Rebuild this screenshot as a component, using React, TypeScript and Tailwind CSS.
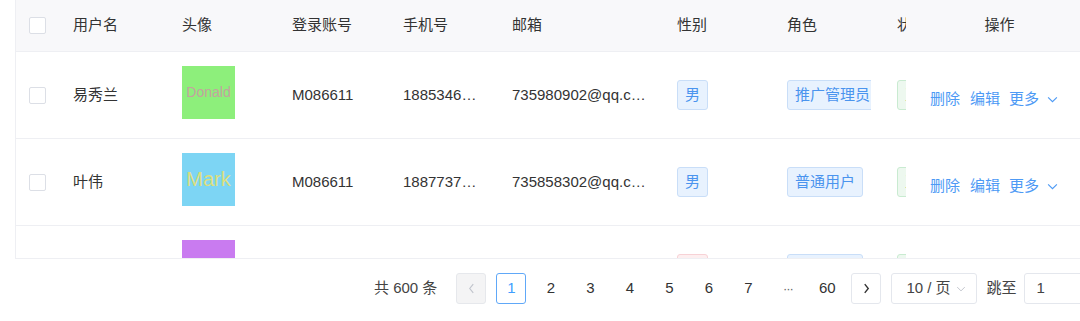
import React from "react";

const FONT = { fontFamily: '"Liberation Sans", "Noto Sans CJK SC", sans-serif' };

type Row = {
  name: string;
  avatarBg: string;
  avatarText: string;
  avatarColor: string;
  avatarSize: string;
  account: string;
  phone: string;
  email: string;
  gender: string;
  role: string;
};

const rows: Row[] = [
  {
    name: "易秀兰",
    avatarBg: "bg-[#8def7b]",
    avatarText: "Donald",
    avatarColor: "text-[#c4a29f]",
    avatarSize: "text-[14px]",
    account: "M086611",
    phone: "1885346…",
    email: "735980902@qq.c…",
    gender: "男",
    role: "推广管理员",
  },
  {
    name: "叶伟",
    avatarBg: "bg-[#7dd5f4]",
    avatarText: "Mark",
    avatarColor: "text-[#dcdf7e]",
    avatarSize: "text-[20px]",
    account: "M086611",
    phone: "1887737…",
    email: "735858302@qq.c…",
    gender: "男",
    role: "普通用户",
  },
  {
    name: "刘娜",
    avatarBg: "bg-[#c97bf0]",
    avatarText: "Lisa",
    avatarColor: "text-[#e0b0f7]",
    avatarSize: "text-[16px]",
    account: "M086611",
    phone: "1883921…",
    email: "735112902@qq.c…",
    gender: "女",
    role: "普通用户",
  },
];

function Checkbox() {
  return <div className="w-[17px] h-[17px] shrink-0 rounded-[2px] border border-[#dcdfe6] bg-white" />;
}

function ChevronDown({ className }: { className?: string }) {
  return (
    <svg className={className} viewBox="0 0 12 8" fill="none" stroke="currentColor" strokeWidth="1.3">
      <path d="M1 1.5 L6 6.5 L11 1.5" />
    </svg>
  );
}

function ChevronLeft({ className }: { className?: string }) {
  return (
    <svg className={className} viewBox="0 0 8 12" fill="none" stroke="currentColor" strokeWidth="1.3">
      <path d="M6 1 L2 6 L6 11" />
    </svg>
  );
}

function ChevronRight({ className }: { className?: string }) {
  return (
    <svg className={className} viewBox="0 0 8 12" fill="none" stroke="currentColor" strokeWidth="1.6">
      <path d="M2 1 L6 6 L2 11" />
    </svg>
  );
}

function Tag({ children, kind }: { children: React.ReactNode; kind: "blue" | "green" | "pink" }) {
  const cls =
    kind === "blue"
      ? "bg-[#e8f2fe] border-[#c9def8] text-[#4a94ee]"
      : kind === "green"
      ? "bg-[#edf8ef] border-[#c9ebd1] text-[#5bbf75]"
      : "bg-[#fdeff0] border-[#f7d2d6] text-[#ee6b78]";
  return (
    <span className={`inline-flex shrink-0 items-center h-[30px] px-[7px] rounded-[3px] border text-[15px] whitespace-nowrap ${cls}`}>
      {children}
    </span>
  );
}

export default function App() {
  return (
    <div className="w-[1080px] h-[321px] bg-white overflow-hidden text-[#333]" style={FONT}>
      {/* table */}
      <div className="ml-[15px] h-[259px] border-l border-b border-[#eeeff3] overflow-hidden">
        <div className="w-[1100px]">
          {/* header */}
          <div className="flex h-[52px] border-b border-[#eeeff3] bg-[#f8f8fa] text-[15px] text-[#333]">
            <div className="w-[45px] shrink-0 flex items-center pl-[13px]">
              <Checkbox />
            </div>
            <div className="w-[109px] shrink-0 flex items-center pl-[12px]">用户名</div>
            <div className="w-[110px] shrink-0 flex items-center pl-[12px]">头像</div>
            <div className="w-[111px] shrink-0 flex items-center pl-[12px]">登录账号</div>
            <div className="w-[109px] shrink-0 flex items-center pl-[12px]">手机号</div>
            <div className="w-[165px] shrink-0 flex items-center pl-[12px]">邮箱</div>
            <div className="w-[110px] shrink-0 flex items-center pl-[12px]">性别</div>
            <div className="w-[110px] shrink-0 flex items-center pl-[12px]">角色</div>
            <div className="w-[21px] shrink-0 flex items-center pl-[12px] overflow-hidden whitespace-nowrap">状态</div>
            <div className="w-[187px] shrink-0 flex items-center justify-center bg-[#f8f8fa]">操作</div>
          </div>
          {/* body rows */}
          {rows.map((r, i) => (
            <div key={i} className="flex h-[87px] border-b border-[#eeeff3] text-[15px] text-[#333]">
              <div className="w-[45px] shrink-0 flex items-center pl-[13px]">
                <Checkbox />
              </div>
              <div className="w-[109px] shrink-0 flex items-center pl-[12px]">{r.name}</div>
              <div className="w-[110px] shrink-0 flex items-center pl-[12px] pb-[6px]">
                <div className={`w-[53px] h-[53px] flex items-center justify-center ${r.avatarBg}`}>
                  <span className={`${r.avatarColor} ${r.avatarSize} leading-none`}>{r.avatarText}</span>
                </div>
              </div>
              <div className="w-[111px] shrink-0 flex items-center pl-[12px]">{r.account}</div>
              <div className="w-[109px] shrink-0 flex items-center pl-[12px] whitespace-nowrap">{r.phone}</div>
              <div className="w-[165px] shrink-0 flex items-center pl-[12px] whitespace-nowrap">{r.email}</div>
              <div className="w-[110px] shrink-0 flex items-center pl-[12px]">
                <Tag kind={r.gender === "男" ? "blue" : "pink"}>{r.gender}</Tag>
              </div>
              <div className="w-[110px] shrink-0 flex items-center pl-[12px]">
                <div className="w-[84px] flex overflow-hidden">
                  <Tag kind="blue">{r.role}</Tag>
                </div>
              </div>
              <div className="w-[21px] shrink-0 flex items-center pl-[12px] overflow-hidden">
                <Tag kind="green">正常</Tag>
              </div>
              <div className="w-[187px] shrink-0 flex items-center pl-[24px] pt-[9px] bg-white text-[#4d9af5]">
                <span>删除</span>
                <span className="ml-[10px]">编辑</span>
                <span className="ml-[9px] flex items-center">
                  更多
                  <ChevronDown className="w-[11px] h-[7px] ml-[8px]" />
                </span>
              </div>
            </div>
          ))}
        </div>
      </div>

      {/* pagination */}
      <div className="flex items-center h-[31px] mt-[14px] pl-[374px] text-[15px] text-[#333] whitespace-nowrap">
        <span className="shrink-0 text-[#444] mr-[19px]">共 600 条</span>
        <div className="shrink-0 w-[30px] h-[31px] rounded-[3px] border border-[#e6e8ec] bg-[#f4f4f5] flex items-center justify-center text-[#c0c4cc] mr-[10px]">
          <ChevronLeft className="w-[7px] h-[11px]" />
        </div>
        <div className="shrink-0 flex items-center gap-[9.5px]">
          <div className="shrink-0 w-[30px] h-[31px] rounded-[3px] border border-[#60a8f8] text-[#409eff] flex items-center justify-center">1</div>
          {["2", "3", "4", "5", "6", "7"].map((p) => (
            <div key={p} className="shrink-0 w-[30px] h-[31px] flex items-center justify-center">{p}</div>
          ))}
          <div className="shrink-0 w-[30px] h-[31px] flex items-center justify-center text-[13px] text-[#666] tracking-[-1px]">···</div>
          <div className="shrink-0 w-[30px] h-[31px] flex items-center justify-center">60</div>
        </div>
        <div className="shrink-0 ml-[9px] w-[30px] h-[31px] rounded-[3px] border border-[#e4e7ed] bg-white flex items-center justify-center text-[#333]">
          <ChevronRight className="w-[7px] h-[11px]" />
        </div>
        <div className="shrink-0 ml-[10px] w-[86px] h-[31px] rounded-[3px] border border-[#e4e7ed] flex items-center pl-[14px] text-[#444]">
          10 / 页
          <ChevronDown className="w-[10px] h-[6px] ml-[5px] text-[#c0c4cc]" />
        </div>
        <span className="shrink-0 ml-[9px] text-[#444]">跳至</span>
        <div className="shrink-0 ml-[8px] w-[70px] h-[31px] rounded-[3px] border border-[#e4e7ed] flex items-center pl-[11px] text-[#444]">1</div>
      </div>
    </div>
  );
}
